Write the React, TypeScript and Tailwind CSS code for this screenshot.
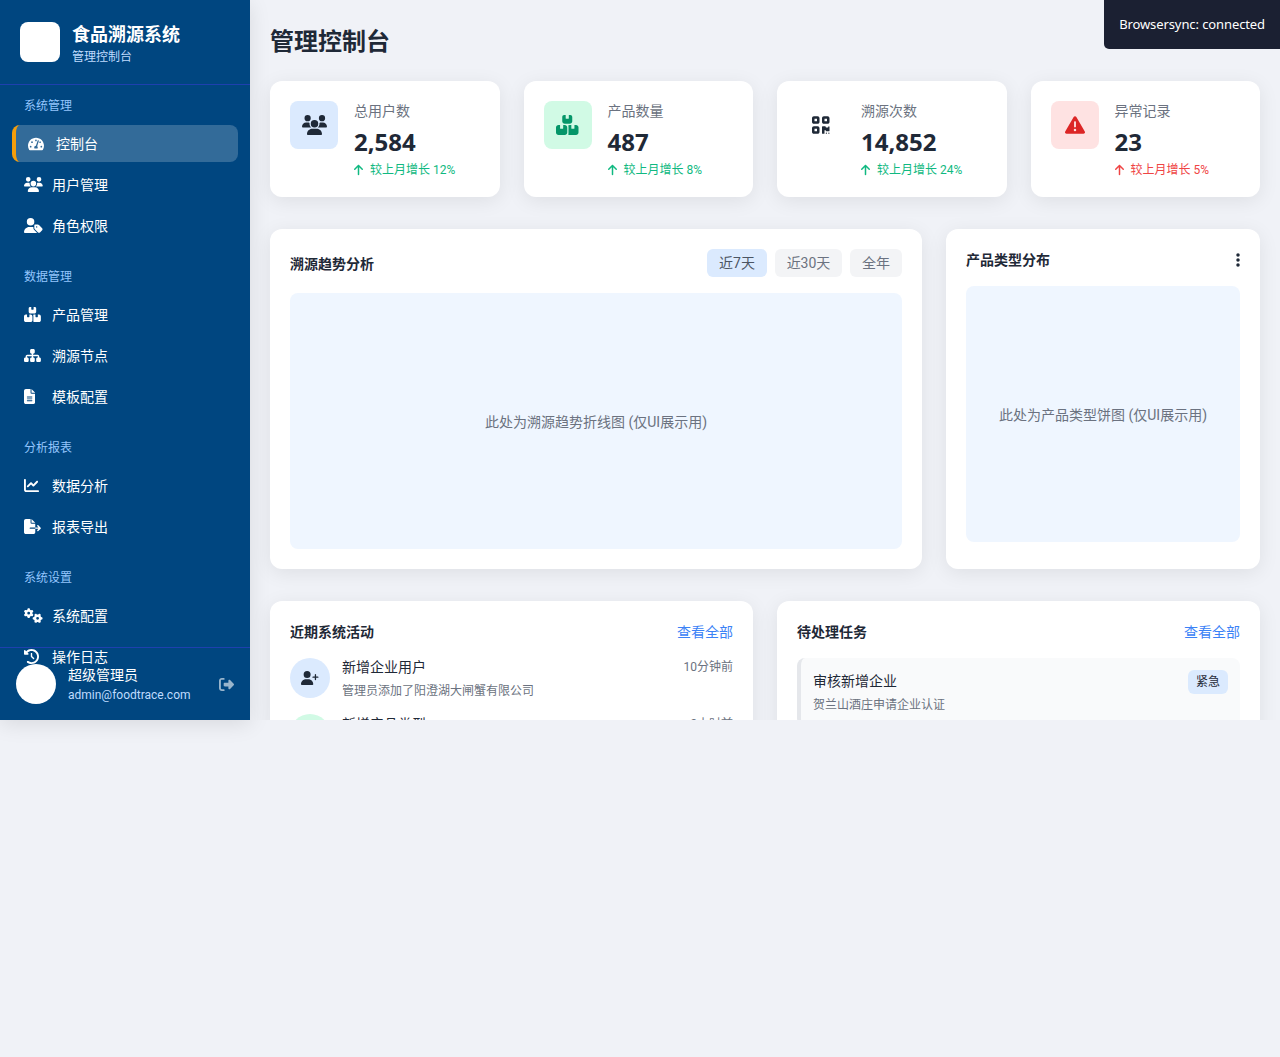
import React from "react";
import { FaTachometerAlt } from "react-icons/fa";
import {
  FaArrowUp,
  FaBoxesStacked,
  FaChartLine,
  FaClockRotateLeft,
  FaEllipsisVertical,
  FaFileExport,
  FaFileLines,
  FaGears,
  FaQrcode,
  FaRightFromBracket,
  FaSitemap,
  FaTriangleExclamation,
  FaUserPlus,
  FaUserTag,
  FaUsers,
} from "react-icons/fa6";

const navSections = [
  {
    title: "系统管理",
    items: [
      { label: "控制台", icon: FaTachometerAlt, size: "h-4 w-4", active: true },
      { label: "用户管理", icon: FaUsers, size: "h-[15px] w-[18.75px]" },
      { label: "角色权限", icon: FaUserTag, size: "h-[15px] w-[18.75px]" },
    ],
  },
  {
    title: "数据管理",
    items: [
      { label: "产品管理", icon: FaBoxesStacked, size: "h-[15px] w-[16.875px]" },
      { label: "溯源节点", icon: FaSitemap, size: "h-[15px] w-[16.875px]" },
      { label: "模板配置", icon: FaFileLines, size: "h-[15px] w-[11.25px]" },
    ],
  },
  {
    title: "分析报表",
    items: [
      { label: "数据分析", icon: FaChartLine, size: "h-[15px] w-[15px]" },
      { label: "报表导出", icon: FaFileExport, size: "h-[15px] w-[16.875px]" },
    ],
  },
  {
    title: "系统设置",
    items: [
      { label: "系统配置", icon: FaGears, size: "h-[15px] w-[18.75px]" },
      { label: "操作日志", icon: FaClockRotateLeft, size: "h-[15px] w-[15px]" },
    ],
  },
];

const stats = [
  { label: "总用户数", value: "2,584", delta: "较上月增长 12%", icon: FaUsers, w: "w-[25px]", box: "bg-[#dbeafe] text-[#1f2937]", up: true },
  { label: "产品数量", value: "487", delta: "较上月增长 8%", icon: FaBoxesStacked, w: "w-[22.5px]", box: "bg-[#d1fae5] text-[#059669]", up: true },
  { label: "溯源次数", value: "14,852", delta: "较上月增长 24%", icon: FaQrcode, w: "w-[17.5px]", box: "text-[#1f2937]", up: true },
  { label: "异常记录", value: "23", delta: "较上月增长 5%", icon: FaTriangleExclamation, w: "w-5", box: "bg-[#fee2e2] text-[#dc2626]", up: false },
];

function Sidebar() {
  return (
    <aside className="relative z-10 h-[720px] w-[250px] shrink-0 overflow-hidden bg-[#004680] text-white shadow-[0_4px_20px_rgba(0,0,0,0.1)]">
      <div className="flex h-[85px] items-center gap-3 border-b border-[#1e40af] px-5">
        <div className="h-10 w-10 rounded-lg bg-white" />
        <div className="pt-[3px]">
          <h1 className="text-lg leading-[27px] font-bold">食品溯源系统</h1>
          <p className="text-xs leading-[18px] text-[#bfdbfe]">管理控制台</p>
        </div>
      </div>

      <nav className="px-3 pt-3">
        {navSections.map((section) => (
          <div key={section.title} className="mb-6">
            <div className="mb-2.5 px-3 text-xs leading-[18px] text-[#93c5fd]">{section.title}</div>
            <ul className="flex flex-col gap-1">
              {section.items.map(({ label, icon: Icon, size, active }) => (
                <li
                  key={label}
                  className={
                    active
                      ? "flex h-[37px] items-center rounded-lg border-l-4 border-[#f59e0b] bg-white/20 px-3 text-sm"
                      : "flex h-[37px] items-center rounded-lg px-3 text-sm"
                  }
                >
                  <span className="mr-2 w-5">
                    <Icon className={size} />
                  </span>
                  {label}
                </li>
              ))}
            </ul>
          </div>
        ))}
      </nav>

      {/* Footer sits on top of the nav, it overlaps the last item */}
      <div className="absolute inset-x-0 bottom-0 flex items-center gap-3 border-t border-[#1e40af] p-4">
        <div className="h-10 w-10 shrink-0 rounded-full bg-white" />
        <div className="min-w-0 flex-1">
          <p className="text-sm leading-[21px]">超级管理员</p>
          <p className="text-xs leading-[18px] text-[#bfdbfe]">admin@foodtrace.com</p>
        </div>
        <FaRightFromBracket className="h-[15px] w-[15px] text-white/60" />
      </div>
    </aside>
  );
}

function StatCard({ label, value, delta, icon: Icon, w, box, up }: (typeof stats)[number]) {
  return (
    <div className="flex items-start gap-4 rounded-xl bg-white p-5 shadow-[0_4px_20px_rgba(0,0,0,0.08)]">
      <div className={`flex h-12 w-12 shrink-0 items-center justify-center rounded-lg ${box}`}>
        <Icon className={`h-5 ${w}`} />
      </div>
      <div>
        <p className="text-sm leading-[21px] text-[#6b7280]">{label}</p>
        <p className="mt-1 text-2xl leading-8 font-bold text-[#1f2937] [font-family:'Noto_Sans','Noto_Sans_CJK_SC',sans-serif]">{value}</p>
        <p className={up ? "mt-[5px] flex items-center text-xs leading-[14px] text-[#10b981]" : "mt-[5px] flex items-center text-xs leading-[14px] text-[#ef4444]"}>
          <FaArrowUp className="mr-[7px] h-3 w-[9px]" />
          {delta}
        </p>
      </div>
    </div>
  );
}

function RangeButton({ label, width, active }: { label: string; width: string; active?: boolean }) {
  return (
    <button className={`h-7 rounded-md text-sm ${width} ${active ? "bg-[#dbeafe] text-[#4b5563]" : "bg-[#f3f4f6] text-[#6b7280]"}`}>
      {label}
    </button>
  );
}

export default function App() {
  return (
    <div className="relative flex min-h-[1057px] items-start bg-[#f0f2f7] [font-family:'Roboto','Noto_Sans_CJK_SC',sans-serif]">
      <Sidebar />

      <main className="h-[720px] flex-1 overflow-hidden p-5">
        <h2 className="mb-[17px] text-2xl leading-[44px] font-bold text-[#1f2937]">管理控制台</h2>

        <div className="mb-8 grid grid-cols-4 gap-6">
          {stats.map((s) => (
            <StatCard key={s.label} {...s} />
          ))}
        </div>

        <div className="mb-8 grid grid-cols-[1fr_314px] gap-6">
          <section className="rounded-xl bg-white p-5 shadow-[0_4px_20px_rgba(0,0,0,0.08)]">
            <div className="mb-4 flex items-center justify-between">
              <h3 className="pt-0.5 text-sm font-bold text-[#1f2937]">溯源趋势分析</h3>
              <div className="flex gap-2">
                <RangeButton label="近7天" width="w-[60px]" active />
                <RangeButton label="近30天" width="w-[67px]" />
                <RangeButton label="全年" width="w-[52px]" />
              </div>
            </div>
            <div className="flex h-64 items-center justify-center rounded-lg bg-[#eff6ff] pt-0.5 text-sm text-[#6b7280]">
              此处为溯源趋势折线图 (仅UI展示用)
            </div>
          </section>

          <section className="rounded-xl bg-white p-5 shadow-[0_4px_20px_rgba(0,0,0,0.08)]">
            <div className="mb-4 flex h-[21px] items-center justify-between">
              <h3 className="text-sm font-bold text-[#1f2937]">产品类型分布</h3>
              <FaEllipsisVertical className="h-4 w-1 text-[#1f2937]" />
            </div>
            <div className="flex h-64 items-center justify-center rounded-lg bg-[#eff6ff] pt-0.5 text-sm text-[#6b7280]">
              此处为产品类型饼图 (仅UI展示用)
            </div>
          </section>
        </div>

        <div className="grid grid-cols-2 gap-6">
          <section className="rounded-xl bg-white p-5 shadow-[0_4px_20px_rgba(0,0,0,0.08)]">
            <div className="mb-4 flex h-[21px] items-center justify-between">
              <h3 className="text-sm font-bold text-[#1f2937]">近期系统活动</h3>
              <a className="text-sm text-[#3b82f6]">查看全部</a>
            </div>
            <div className="flex flex-col gap-4">
              <div className="flex h-10 gap-3">
                <div className="flex h-10 w-10 shrink-0 items-center justify-center rounded-full bg-[#dbeafe] text-[#1f2937]">
                  <FaUserPlus className="h-3.5 w-[17.5px]" />
                </div>
                <div className="-mt-px flex-1">
                  <div className="flex justify-between">
                    <p className="text-sm leading-[21px] text-[#1f2937]">新增企业用户</p>
                    <span className="text-xs leading-5 text-[#6b7280]">10分钟前</span>
                  </div>
                  <p className="mt-1 text-xs leading-[18px] text-[#6b7280]">管理员添加了阳澄湖大闸蟹有限公司</p>
                </div>
              </div>
              <div className="flex h-10 gap-3">
                <div className="flex h-10 w-10 shrink-0 items-center justify-center rounded-full bg-[#d1fae5] text-[#059669]">
                  <FaBoxesStacked className="h-3.5 w-[15.75px]" />
                </div>
                <div className="flex flex-1 justify-between">
                  <p className="text-sm leading-[21px] text-[#1f2937]">新增产品类型</p>
                  <span className="text-xs leading-5 text-[#6b7280]">2小时前</span>
                </div>
              </div>
            </div>
          </section>

          <section className="rounded-xl bg-white p-5 shadow-[0_4px_20px_rgba(0,0,0,0.08)]">
            <div className="mb-4 flex h-[21px] items-center justify-between">
              <h3 className="text-sm font-bold text-[#1f2937]">待处理任务</h3>
              <a className="text-sm text-[#3b82f6]">查看全部</a>
            </div>
            <div className="flex items-start justify-between rounded-lg border-l-4 border-[#e5e7eb] bg-[#f9fafb] p-3">
              <div className="pt-px">
                <p className="text-sm leading-[21px] text-[#1f2937]">审核新增企业</p>
                <p className="mt-1 text-xs leading-[18px] text-[#6b7280]">贺兰山酒庄申请企业认证</p>
              </div>
              <span className="rounded-md bg-[#dbeafe] px-2 py-[3px] text-xs leading-[18px] text-[#1f2937]">紧急</span>
            </div>
          </section>
        </div>
      </main>

      <div className="absolute top-0 right-0 z-20 rounded-bl-[5px] bg-[#1b2032] p-[15px] text-[13px] leading-[19px] tracking-[-0.1px] text-white [font-family:'Noto_Sans',sans-serif]">
        Browsersync: connected
      </div>
    </div>
  );
}
